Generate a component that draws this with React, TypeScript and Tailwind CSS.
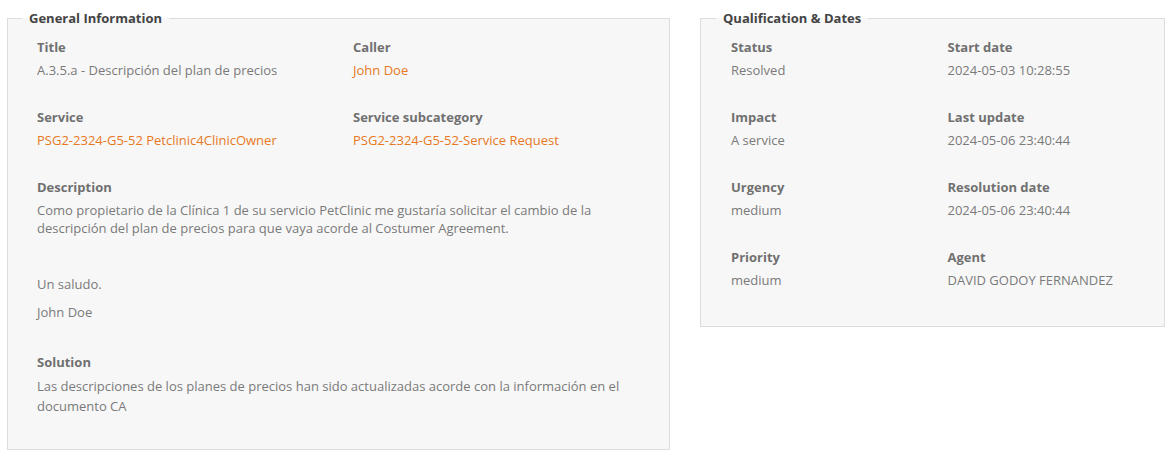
import React from "react";

type Field = { label: string; value: string; link?: boolean };

const font = { fontFamily: '"Open Sans", "Noto Sans", Arial, sans-serif' };

function Item({ label, value, link }: Field) {
  return (
    <div className="flex flex-col px-[15px] pb-[29px]">
      <div className="text-[13px] leading-[18px] font-bold text-[#707070] mb-[5px]">{label}</div>
      <div className={`text-[13px] leading-[18px] ${link ? "text-[#e8781e]" : "text-[#7a7a7a]"}`}>{value}</div>
    </div>
  );
}

function Box({ title, className, children }: { title: string; className: string; children: React.ReactNode }) {
  return (
    <fieldset className={`border border-[#dddddd] bg-[#f7f7f7] pt-[10px] ${className}`}>
      <legend className="px-[7px] text-[13px] leading-[20px] font-bold text-[#444444]">{title}</legend>
      {children}
    </fieldset>
  );
}

export default function App() {
  return (
    <main className="flex items-start gap-[30px] pl-[7px] pt-[8px] bg-white min-h-[458px]" style={font}>
      <Box title="General Information" className="w-[663px] pl-[14px] pr-[15px] pb-[33px]">
        <div className="grid grid-cols-2">
          <Item label="Title" value="A.3.5.a - Descripción del plan de precios" />
          <Item label="Caller" value="John Doe" link />
          <Item label="Service" value="PSG2-2324-G5-52 Petclinic4ClinicOwner" link />
          <Item label="Service subcategory" value="PSG2-2324-G5-52-Service Request" link />
          <div className="col-span-2 flex flex-col px-[15px] pb-[22px]">
            <div className="text-[13px] leading-[18px] font-bold text-[#707070] mb-[5px]">Description</div>
            <div className="flex flex-col gap-[10px] text-[13px] leading-[18px] text-[#7a7a7a]">
              <p>
                Como propietario de la Clínica 1 de su servicio PetClinic me gustaría solicitar el cambio de la
                descripción del plan de precios para que vaya acorde al Costumer Agreement.
              </p>
              <p>&nbsp;</p>
              <p>Un saludo.</p>
              <p>John Doe</p>
            </div>
            <div className="h-[10px]" />
          </div>
          <div className="col-span-2 flex flex-col px-[15px]">
            <div className="text-[13px] leading-[18px] font-bold text-[#707070] mb-[5px]">Solution</div>
            <div className="text-[13px] leading-[20px] text-[#7a7a7a]">
              Las descripciones de los planes de precios han sido actualizadas acorde con la información en el
              documento CA
            </div>
          </div>
        </div>
      </Box>
      <Box title="Qualification & Dates" className="w-[465px] px-[15px] pb-[8px]">
        <div className="grid grid-cols-2">
          <Item label="Status" value="Resolved" />
          <Item label="Start date" value="2024-05-03 10:28:55" />
          <Item label="Impact" value="A service" />
          <Item label="Last update" value="2024-05-06 23:40:44" />
          <Item label="Urgency" value="medium" />
          <Item label="Resolution date" value="2024-05-06 23:40:44" />
          <Item label="Priority" value="medium" />
          <Item label="Agent" value="DAVID GODOY FERNANDEZ" />
        </div>
      </Box>
    </main>
  );
}
